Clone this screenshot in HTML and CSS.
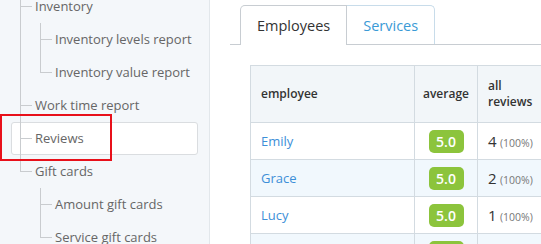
FILE: index.html
```html
<!DOCTYPE html>
<html lang="en">
<head>
  <meta charset="UTF-8" />
  <title>Reviews report</title>
  <link rel="stylesheet" href="styles.css">
</head>
<body>

  <aside class="sidebar">
    <ul class="tree">
      <li>
        <div class="label">Inventory</div>
        <ul class="tree sub">
          <li><div class="label">Inventory levels report</div></li>
          <li><div class="label">Inventory value report</div></li>
        </ul>
      </li>
      <li><div class="label">Work time report</div></li>
      <li class="active"><div class="label">Reviews</div></li>
      <li>
        <div class="label">Gift cards</div>
        <ul class="tree sub">
          <li><div class="label">Amount gift cards</div></li>
          <li><div class="label">Service gift cards</div></li>
        </ul>
      </li>
    </ul>
    <div class="highlight"></div>
  </aside>

  <main class="content">
    <div class="tabs">
      <div class="tab tab-active">Employees</div>
      <div class="tab">Services</div>
    </div>

    <table class="reviews">
      <colgroup>
        <col class="col-name">
        <col class="col-avg">
        <col class="col-all">
        <col class="col-rest">
      </colgroup>
      <thead>
        <tr>
          <th>employee</th>
          <th class="center">average</th>
          <th>all<br>reviews</th>
          <th></th>
        </tr>
      </thead>
      <tbody>
        <tr>
          <td><a href="#">Emily</a></td>
          <td class="center"><span class="badge">5.0</span></td>
          <td><span class="count">4</span> <span class="pct">(100%)</span></td>
          <td></td>
        </tr>
        <tr class="alt">
          <td><a href="#">Grace</a></td>
          <td class="center"><span class="badge">5.0</span></td>
          <td><span class="count">2</span> <span class="pct">(100%)</span></td>
          <td></td>
        </tr>
        <tr>
          <td><a href="#">Lucy</a></td>
          <td class="center"><span class="badge">5.0</span></td>
          <td><span class="count">1</span> <span class="pct">(100%)</span></td>
          <td></td>
        </tr>
        <tr class="alt">
          <td><a href="#">Mia</a></td>
          <td class="center"><span class="badge">5.0</span></td>
          <td><span class="count">1</span> <span class="pct">(100%)</span></td>
          <td></td>
        </tr>
      </tbody>
    </table>
  </main>

</body>
</html>
```

FILE: styles.css
```css
:root {
  --line: #c9cccf;
  --table-border: #d3dbe1;
  --link-blue: #3d8fd8;
  --badge-green: #8cc43c;
}

html, body {
  margin: 0;
  height: 100%;
}

body {
  display: flex;
  overflow: hidden;
  font-family: 'Open Sans', 'Liberation Sans', sans-serif;
  color: #333;
  background: #fff;
}

/* --- Sidebar tree --- */
.sidebar {
  position: relative;
  width: 209px;
  flex-shrink: 0;
  background: #f4f7fa;
  border-right: 1px solid #e2e7eb;
  overflow: hidden;
}

.tree {
  list-style: none;
  margin: -10px 0 0 0;
  padding: 0;
  font-size: 13px;
  color: #666;
}
.tree.sub {
  margin: 0 0 0 20px;
}
.tree li {
  position: relative;
}
.tree li::before {
  content: "";
  position: absolute;
  left: 20px;
  top: 0;
  bottom: 0;
  border-left: 1px solid var(--line);
}
.tree li:last-child::before {
  bottom: auto;
  height: 17px;
}
.tree li::after {
  content: "";
  position: absolute;
  left: 20px;
  top: 16px;
  width: 12px;
  border-top: 1px solid var(--line);
}

.label {
  height: 33px;
  line-height: 33px;
  padding-left: 35px;
  white-space: nowrap;
}

.tree li.active > .label {
  margin: 0 11px;
  padding-left: 23px;
  height: 33px;
  line-height: 31px;
  box-sizing: border-box;
  background: #fff;
  border: 1px solid #dadde0;
  border-radius: 3px;
}

.highlight {
  position: absolute;
  left: 0;
  top: 114px;
  width: 112px;
  height: 47px;
  box-sizing: border-box;
  border: 2px solid #e8101a;
}

/* --- Main content --- */
.content {
  flex: 1;
  overflow: hidden;
  padding-left: 20px;
}

.tabs {
  display: flex;
  margin-top: 5px;
  padding-left: 10px;
  height: 39px;
  border-bottom: 1px solid #c8cdd2;
}
.tab {
  height: 39px;
  line-height: 39px;
  padding: 0 16px;
  font-size: 14.5px;
  color: #3a9ad6;
  box-sizing: border-box;
  border: 1px solid #c8dcea;
  border-left: none;
  border-bottom: none;
  border-radius: 0 5px 0 0;
}
.tab-active {
  height: 40px;
  margin-bottom: -1px;
  color: #333;
  background: #fff;
  border: 1px solid #c8cdd2;
  border-bottom: none;
  border-radius: 5px 0 0 0;
}

.reviews {
  margin: 20px 0 0 20px;
  border-collapse: collapse;
  table-layout: fixed;
  width: 420px;
  font-size: 13px;
}
.col-name { width: 164px; }
.col-avg { width: 63px; }
.col-all { width: 80px; }

.reviews th,
.reviews td {
  border: 1px solid var(--table-border);
  padding: 0 10px;
  text-align: left;
  white-space: nowrap;
}
.reviews th {
  height: 56px;
  background: #f2f6f9;
  font-size: 12px;
  font-weight: 600;
  line-height: 16px;
  color: #333;
}
.reviews td {
  height: 36px;
}
.reviews .center {
  text-align: center;
  padding: 0;
}
.reviews tr.alt td {
  background: #f1f8fd;
}

.reviews a {
  color: var(--link-blue);
  text-decoration: none;
}

.badge {
  display: inline-block;
  width: 35px;
  height: 23px;
  line-height: 23px;
  border-radius: 5px;
  background: var(--badge-green);
  color: #fff;
  font-weight: 600;
  font-size: 14px;
  vertical-align: middle;
}

.count {
  font-size: 15px;
  color: #333;
}
.pct {
  font-size: 10.5px;
  color: #777;
}
```
